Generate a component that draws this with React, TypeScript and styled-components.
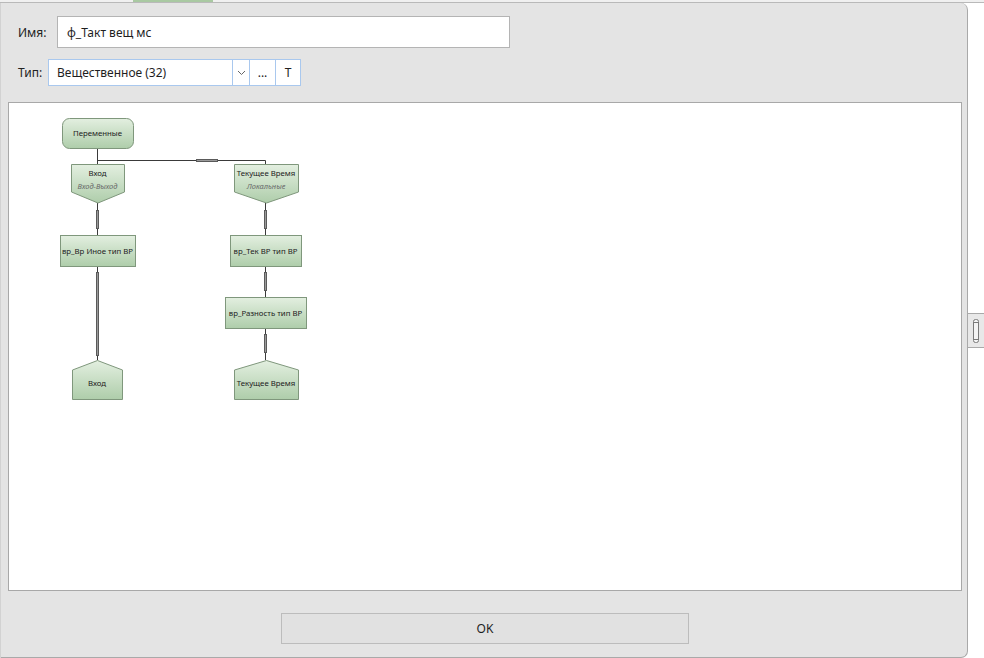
import React from 'react'
import styled, { createGlobalStyle } from 'styled-components'

const GlobalStyle = createGlobalStyle`
  html, body {
    margin: 0;
    padding: 0;
    background: #ffffff;
  }
  body {
    font-family: "Noto Sans", "Open Sans", sans-serif;
    font-size: 12px;
    color: #1e1e1e;
  }
`

const Screen = styled.div`
  width: 984px;
  height: 658px;
  display: flex;
  flex-direction: column;
  overflow: hidden;
`

const TabStrip = styled.div`
  height: 2px;
  display: flex;
  border-bottom: 1px solid #b9b9b9;
  background: #f0f0f0;
`

const ActiveTab = styled.div`
  margin-left: 133px;
  width: 80px;
  background: #a9c9a2;
`

const Body = styled.div`
  flex: 1;
  display: flex;
`

const Panel = styled.div`
  width: 968px;
  display: flex;
  flex-direction: column;
  background: #e4e4e4;
  border-right: 1px solid #a9a9a9;
  border-bottom: 1px solid #a9a9a9;
  border-left: 1px solid #d2d2d2;
  border-top-right-radius: 7px;
  border-bottom-right-radius: 7px;
  box-sizing: border-box;
`

const Form = styled.div`
  display: flex;
  flex-direction: column;
  gap: 11px;
  padding: 13px 0 0 0;
`

const Row = styled.div`
  display: flex;
  align-items: center;
`

const Label = styled.span<{ $width: number }>`
  width: ${(p) => p.$width}px;
  padding-left: 17px;
  box-sizing: border-box;
  font-size: 12px;
  color: #222;
`

const NameInput = styled.div`
  width: 453px;
  height: 32px;
  box-sizing: border-box;
  border: 1px solid #b4b4b4;
  background: #fff;
  display: flex;
  align-items: center;
  padding-left: 9px;
  font-size: 12px;
`

const Combo = styled.div`
  display: flex;
  height: 27px;
  border: 1px solid #a9c8ee;
  background: #fff;
  box-sizing: border-box;
`

const ComboText = styled.div`
  width: 183px;
  display: flex;
  align-items: center;
  padding-left: 8px;
  box-sizing: border-box;
  font-size: 12px;
`

const ComboButton = styled.div<{ $width: number }>`
  width: ${(p) => p.$width}px;
  border-left: 1px solid #a9c8ee;
  display: flex;
  align-items: center;
  justify-content: center;
  font-size: 12px;
  color: #222;
`

const Canvas = styled.div`
  margin: 16px 0 0 7px;
  width: 954px;
  height: 489px;
  box-sizing: border-box;
  background: #fff;
  border: 1px solid #a8a8a8;
  overflow: hidden;
`

const Footer = styled.div`
  flex: 1;
  display: flex;
  justify-content: center;
  align-items: flex-start;
  padding-top: 22px;
  padding-left: 2px;
`

const OkButton = styled.button`
  width: 408px;
  height: 31px;
  border: 1px solid #bcbcbc;
  background: #e1e1e1;
  font-family: "Noto Sans", "Open Sans", sans-serif;
  font-size: 12px;
  color: #1e1e1e;
`

const Gutter = styled.div`
  flex: 1;
  display: flex;
  flex-direction: column;
  padding-top: 310px;
`

const Grip = styled.div`
  height: 33px;
  border-top: 1px solid #a9a9a9;
  border-bottom: 1px solid #a9a9a9;
  background: #e8e8e8;
  display: flex;
  align-items: center;
  justify-content: center;
`

const NODE_FONT = '"Noto Sans", "Open Sans", sans-serif'

type NodeProps = { x: number; y: number; w: number; h: number }

const Defs = () => (
  <defs>
    <linearGradient id="nodeFill" x1="0" y1="0" x2="0" y2="1">
      <stop offset="0" stopColor="#e3efe0" />
      <stop offset="1" stopColor="#aecdaa" />
    </linearGradient>
  </defs>
)

const nodeStroke = '#7f977c'

const Label8 = ({ x, y, text, italic }: { x: number; y: number; text: string; italic?: boolean }) => (
  <text
    x={x}
    y={y}
    textAnchor="middle"
    fontFamily={NODE_FONT}
    fontSize={italic ? 7.5 : 7.8}
    fontStyle={italic ? 'italic' : 'normal'}
    fill={italic ? '#6a6a6a' : '#222'}
  >
    {text}
  </text>
)

const RectNode = ({ x, y, w, h, text, r = 0 }: NodeProps & { text: string; r?: number }) => (
  <g>
    <rect x={x + 0.5} y={y + 0.5} width={w} height={h} rx={r} fill="url(#nodeFill)" stroke={nodeStroke} />
    <Label8 x={x + w / 2} y={y + h / 2 + 3} text={text} />
  </g>
)

const DownNode = ({ x, y, w, h, text, sub }: NodeProps & { text: string; sub: string }) => {
  const side = h - 11
  const pts = `${x + 0.5},${y + 0.5} ${x + w + 0.5},${y + 0.5} ${x + w + 0.5},${y + side} ${x + w / 2 + 0.5},${y + h} ${x + 0.5},${y + side}`
  return (
    <g>
      <polygon points={pts} fill="url(#nodeFill)" stroke={nodeStroke} />
      <Label8 x={x + w / 2} y={y + 12} text={text} />
      <Label8 x={x + w / 2} y={y + 25} text={sub} italic />
    </g>
  )
}

const UpNode = ({ x, y, w, h, text }: NodeProps & { text: string }) => {
  const pts = `${x + w / 2 + 0.5},${y + 0.5} ${x + w + 0.5},${y + 10} ${x + w + 0.5},${y + h + 0.5} ${x + 0.5},${y + h + 0.5} ${x + 0.5},${y + 10}`
  return (
    <g>
      <polygon points={pts} fill="url(#nodeFill)" stroke={nodeStroke} />
      <Label8 x={x + w / 2} y={y + 26} text={text} />
    </g>
  )
}

const VLink = ({ x, y1, y2, t1, t2 }: { x: number; y1: number; y2: number; t1: number; t2: number }) => (
  <g>
    <line x1={x + 0.5} y1={y1} x2={x + 0.5} y2={y2} stroke="#3a3a3a" />
    <rect x={x - 1} y={t1} width={3} height={t2 - t1} fill="#5a5a5a" />
    <line x1={x + 0.5} y1={t1 + 1} x2={x + 0.5} y2={t2 - 1} stroke="#9a9a9a" />
  </g>
)

const Diagram = () => (
  <svg width={952} height={487} viewBox="9 103 952 487">
    <Defs />
    {/* bus from Переменные */}
    <line x1={97.5} y1={148} x2={97.5} y2={164} stroke="#3a3a3a" />
    <polyline points="97.5,160.5 265.5,160.5 265.5,164" fill="none" stroke="#3a3a3a" />
    <rect x={196} y={159} width={22} height={3} fill="#5a5a5a" />
    <line x1={197} y1={160.5} x2={217} y2={160.5} stroke="#9a9a9a" />

    <VLink x={97} y1={203} y2={235} t1={210} t2={229} />
    <VLink x={265} y1={203} y2={235} t1={210} t2={229} />
    <VLink x={97} y1={266} y2={360} t1={272} t2={356} />
    <VLink x={265} y1={266} y2={297} t1={272} t2={291} />
    <VLink x={265} y1={328} y2={360} t1={334} t2={353} />

    <RectNode x={62} y={118} w={71} h={30} r={7} text="Переменные" />
    <DownNode x={71} y={164} w={53} h={39} text="Вход" sub="Вход-Выход" />
    <DownNode x={234} y={164} w={64} h={39} text="Текущее Время" sub="Локальные" />
    <RectNode x={60} y={235} w={75} h={31} text="вр_Вр Иное тип ВР" />
    <RectNode x={230} y={235} w={71} h={31} text="вр_Тек ВР тип ВР" />
    <RectNode x={225} y={297} w={81} h={31} text="вр_Разность тип ВР" />
    <UpNode x={72} y={360} w={50} h={39} text="Вход" />
    <UpNode x={234} y={360} w={64} h={39} text="Текущее Время" />
  </svg>
)

const App = () => (
  <>
    <GlobalStyle />
    <Screen>
      <TabStrip>
        <ActiveTab />
      </TabStrip>
      <Body>
        <Panel>
          <Form>
            <Row>
              <Label $width={56}>Имя:</Label>
              <NameInput>ф_Такт вещ мс</NameInput>
            </Row>
            <Row>
              <Label $width={47}>Тип:</Label>
              <Combo>
                <ComboText>Вещественное (32)</ComboText>
                <ComboButton $width={16}>
                  <svg width="9" height="6" viewBox="0 0 9 6">
                    <polyline points="1,1 4.5,4.5 8,1" fill="none" stroke="#666" strokeWidth="1" />
                  </svg>
                </ComboButton>
                <ComboButton $width={25}>...</ComboButton>
                <ComboButton $width={24}>T</ComboButton>
              </Combo>
            </Row>
          </Form>
          <Canvas>
            <Diagram />
          </Canvas>
          <Footer>
            <OkButton>OK</OkButton>
          </Footer>
        </Panel>
        <Gutter>
          <Grip>
            <svg width="6" height="24" viewBox="0 0 6 24">
              <rect x="0.5" y="0.5" width="5" height="23" rx="2" fill="#f4f4f4" stroke="#7a7a7a" />
              <line x1="1" y1="3.5" x2="5" y2="3.5" stroke="#7a7a7a" />
              <line x1="1" y1="20.5" x2="5" y2="20.5" stroke="#7a7a7a" />
            </svg>
          </Grip>
        </Gutter>
      </Body>
    </Screen>
  </>
)

export default App
